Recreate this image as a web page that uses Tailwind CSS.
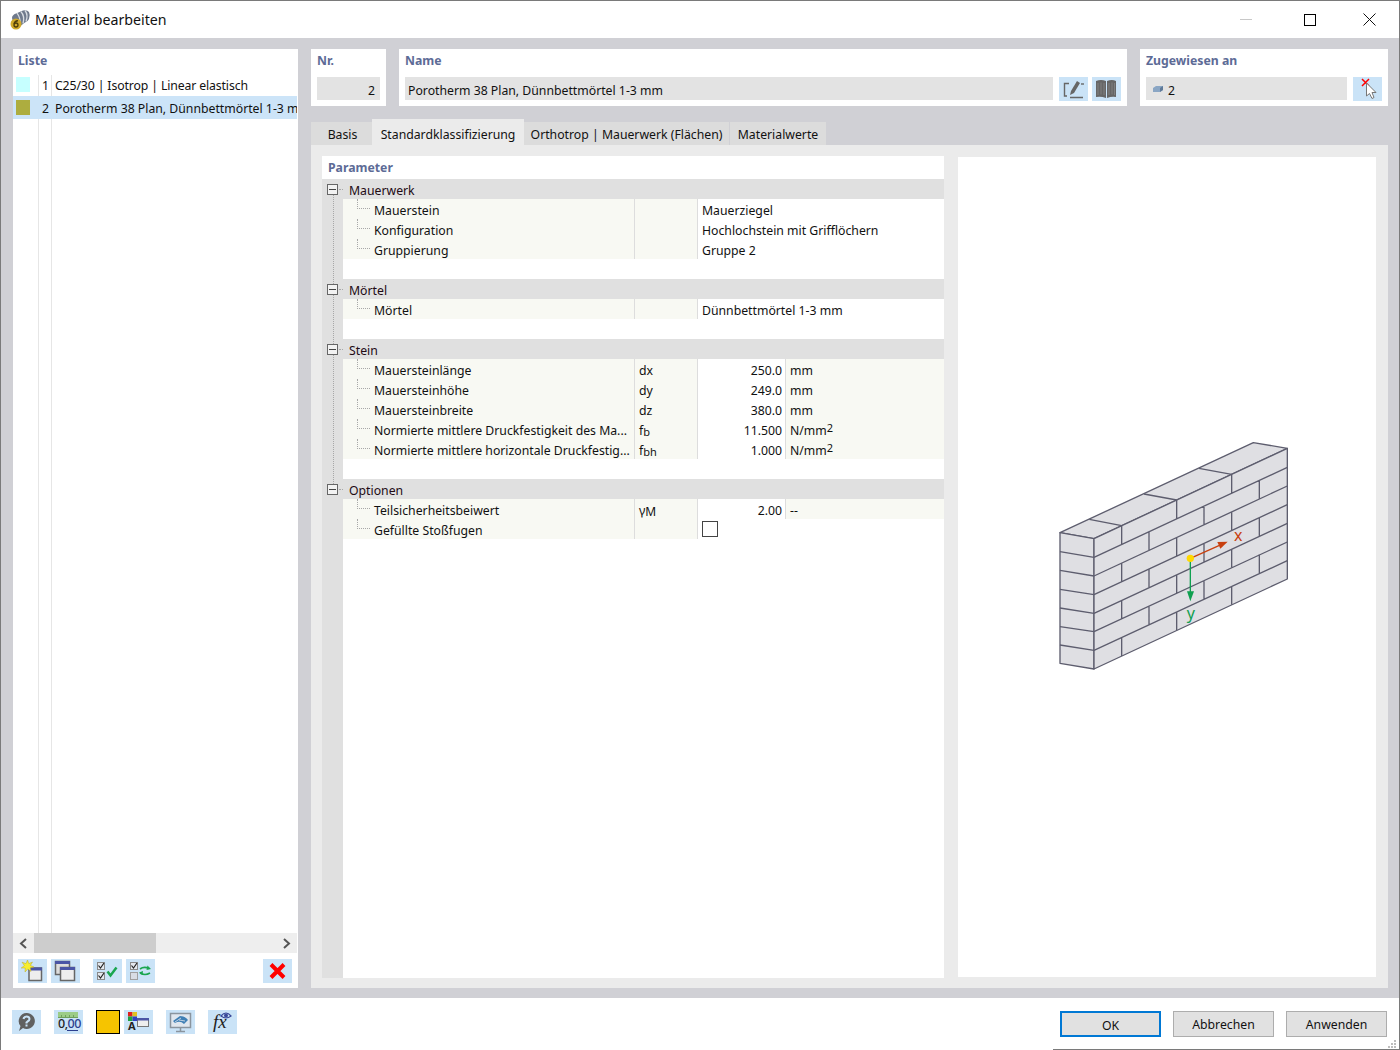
<!DOCTYPE html>
<html lang="de">
  <head>
    <meta charset="UTF-8" />
    <title>Material bearbeiten</title>
    <script src="https://cdn.jsdelivr.net/npm/@tailwindcss/browser@4"></script>
  </head>
  <body class="h-[1050px] w-[1400px] overflow-hidden bg-white font-['Noto_Sans',sans-serif] text-[12.25px] leading-[22px] text-[#111]">
    <div class="flex h-full flex-col border-x border-t border-[#7a7a7a]">
      <!-- Titelleiste -->
      <div class="flex h-[37px] items-center pl-[9px]">
        <svg width="21" height="21" viewBox="0 0 21 21">
          <path d="M2 9 Q2 6 6 4.5 L13 1.5 Q17 0.5 19 3 Q20.5 6 19 10 Q18 12 15 13.5 L9 18 L4 17 Z" fill="#6f7a8c" />
          <path d="M15 1.5 Q18.5 6 16 12.5 M11 2.8 Q15 7 13 14.5 M7 4.2 Q11 9 10 16.5" stroke="#d9dde3" stroke-width="1.3" fill="none" />
          <circle cx="6" cy="15" r="5.5" fill="#d0a92a" />
          <circle cx="6" cy="16" r="2" fill="none" stroke="#4d3d0a" stroke-width="1.3" />
          <path d="M8 11.8 Q5 11.5 4 15" fill="none" stroke="#4d3d0a" stroke-width="1.3" />
        </svg>
        <span class="ml-[4px] text-[14.2px]">Material bearbeiten</span>
        <div class="ml-auto flex items-center">
          <span class="mr-[52px] h-px w-[12px] bg-[#c8c8c8]"></span>
          <span class="mr-[47px] h-[12px] w-[12px] border border-black"></span>
          <svg class="mr-[23px]" width="13" height="13" viewBox="0 0 13 13">
            <path d="M0.5 0.5 L12.5 12.5 M12.5 0.5 L0.5 12.5" stroke="#111" stroke-width="1" />
          </svg>
        </div>
      </div>

      <!-- Hauptbereich -->
      <div class="flex h-[960px] gap-[13px] bg-[#d0d0d5] pt-[11px] pr-[11px] pb-[10px] pl-[12px]">
        <!-- Liste -->
        <div class="flex w-[285px] flex-col bg-white">
          <div class="h-[26px] pl-[5px] pt-[1px] font-bold text-[#5d6b96]">Liste</div>
          <div class="relative flex-1">
            <span class="absolute top-0 left-[25px] h-full w-px bg-[#e6e6e6]"></span>
            <span class="absolute top-0 left-[38px] h-full w-px bg-[#e6e6e6]"></span>
            <div class="relative flex h-[21px] items-center pb-[2px]">
              <span class="ml-[3px] h-[15px] w-[14px] bg-[#c6ffff]"></span>
              <span class="ml-[12px] mt-[2px] w-[7px] text-right">1</span>
              <span class="ml-[6px] mt-[2px] tracking-[-0.12px] whitespace-nowrap">C25/30 | Isotrop | Linear elastisch</span>
            </div>
            <div class="relative flex h-[23px] w-[284px] items-center overflow-hidden bg-[#cce4f8]">
              <span class="ml-[3px] h-[15px] w-[14px] shrink-0 bg-[#adad3f]"></span>
              <span class="ml-[12px] mt-[2px] w-[7px] shrink-0 text-right">2</span>
              <span class="ml-[6px] mt-[2px] whitespace-nowrap">Porotherm 38 Plan, Dünnbettmörtel 1-3 mm</span>
            </div>
          </div>
          <!-- Scrollleiste -->
          <div class="flex h-[20px] w-[284px] items-center bg-[#eeeeee]">
            <svg class="mx-[6px]" width="9" height="11" viewBox="0 0 9 11"><path d="M7 1 L2 5.5 L7 10" fill="none" stroke="#555" stroke-width="2" /></svg>
            <span class="h-full w-[122px] bg-[#cdcdcd]"></span>
            <svg class="ml-auto mr-[6px]" width="9" height="11" viewBox="0 0 9 11"><path d="M2 1 L7 5.5 L2 10" fill="none" stroke="#555" stroke-width="2" /></svg>
          </div>
          <!-- Werkzeuge Liste -->
          <div class="flex h-[35px] items-start pt-[6px] pl-[5px]">
            <button class="h-[24px] w-[29px] bg-[#cae3f7]">
              <svg width="29" height="24" viewBox="0 0 29 24">
                <rect x="11" y="9" width="12.5" height="12.5" fill="#eee" stroke="#666" stroke-width="1.5" />
                <rect x="10.5" y="8.5" width="13.5" height="3" fill="#4a55a5" />
                <path d="M9.5 1 L10.8 4.6 L14.5 3 L12.4 6.4 L16 8 L12.2 8.8 L13 12.5 L9.8 10 L7 13 L7.2 9 L3.2 9 L6.4 6.6 L4 3.2 L8 4.6 Z" fill="#f7ee2e" stroke="#b8ab2c" stroke-width=".5" />
              </svg>
            </button>
            <button class="ml-[4px] h-[24px] w-[29px] bg-[#cae3f7]">
              <svg width="29" height="24" viewBox="0 0 29 24">
                <rect x="4.5" y="2.5" width="14" height="13" fill="#ddd" stroke="#666" stroke-width="1.5" />
                <rect x="4" y="2" width="15" height="3" fill="#4a55a5" />
                <rect x="9.5" y="8.5" width="14" height="13" fill="#eee" stroke="#666" stroke-width="1.5" />
                <rect x="9" y="8" width="15" height="3" fill="#4a55a5" />
              </svg>
            </button>
            <button class="ml-[13px] h-[24px] w-[29px] bg-[#cae3f7]">
              <svg width="29" height="24" viewBox="0 0 29 24">
                <rect x="4.5" y="3.5" width="7" height="7" fill="#e4e8ee" stroke="#8a8a8a" />
                <rect x="4.5" y="13.5" width="7" height="7" fill="#e4e8ee" stroke="#8a8a8a" />
                <path d="M5.5 6.5 L7.5 9 L11 4 M5.5 16.5 L7.5 19 L11 14" fill="none" stroke="#222" stroke-width="1.2" />
                <path d="M14.5 12.5 L17.5 16.5 L23.5 8.5" fill="none" stroke="#1aa64f" stroke-width="2.5" />
              </svg>
            </button>
            <button class="ml-[4px] h-[24px] w-[29px] bg-[#cae3f7]">
              <svg width="29" height="24" viewBox="0 0 29 24">
                <rect x="4.5" y="3.5" width="7" height="7" fill="#e4e8ee" stroke="#8a8a8a" />
                <rect x="4.5" y="13.5" width="7" height="7" fill="#d8dde4" stroke="#a0a0a0" />
                <path d="M5.5 6.5 L7.5 9 L11 4" fill="none" stroke="#222" stroke-width="1.2" />
                <path d="M14 10 Q18 7 23 9.5 M14 14 Q19 17 24 14" fill="none" stroke="#1aa64f" stroke-width="1.6" />
                <path d="M21.5 6.5 L25 10 L20.5 11 Z M17 12 L13 13.5 L16.5 16 Z" fill="#1aa64f" />
              </svg>
            </button>
            <button class="ml-[108px] h-[24px] w-[29px] bg-[#cae3f7]">
              <svg width="29" height="24" viewBox="0 0 29 24">
                <path d="M8 5.5 L21 18.5 M21 5.5 L8 18.5" stroke="#f00" stroke-width="4" />
              </svg>
            </button>
          </div>
        </div>

        <!-- Rechte Seite -->
        <div class="flex w-[1077px] flex-col">
          <div class="flex h-[57px] gap-[13px]">
            <div class="w-[75px] bg-white px-[6px]">
              <div class="h-[28px] pt-[1px] font-bold text-[#5d6b96]">Nr.</div>
              <div class="h-[23px] w-[63px] bg-[#e3e3e3] pr-[5px] pt-[3px] text-right">2</div>
            </div>
            <div class="w-[728px] bg-white px-[6px]">
              <div class="h-[28px] pt-[1px] font-bold text-[#5d6b96]">Name</div>
              <div class="flex items-start">
                <div class="h-[23px] w-[648px] bg-[#e3e3e3] pl-[3px] pt-[3px]">Porotherm 38 Plan, Dünnbettmörtel 1-3 mm</div>
                <button class="ml-[6px] h-[24px] w-[29px] bg-[#cae3f7]">
                  <svg width="29" height="24" viewBox="0 0 29 24">
                    <path d="M10 6.5 H5.5 V19 H8 M11 20.5 H24" fill="none" stroke="#666" stroke-width="1.4" />
                    <path d="M11 18 L12 14 L18 4 L21 6 L15 16 Z" fill="#666" />
                    <path d="M22 7 H25" stroke="#666" stroke-width="1.4" />
                  </svg>
                </button>
                <button class="ml-[4px] h-[24px] w-[29px] bg-[#cae3f7]">
                  <svg width="29" height="24" viewBox="0 0 29 24">
                    <path d="M4 4 Q9 2 14 4 V21 Q9 19 4 20 Z M15 4 Q20 2 24 4 V20 Q20 19 15 21 Z" fill="#666" />
                    <path d="M6 6 V18 M9 5.5 V17.5 M12 6 V18 M17 6 V18 M20 5.5 V17.5 M22.5 6 V18" stroke="#808080" stroke-width="1" />
                  </svg>
                </button>
              </div>
            </div>
            <div class="w-[248px] bg-white px-[6px]">
              <div class="h-[28px] pt-[1px] font-bold text-[#5d6b96]">Zugewiesen an</div>
              <div class="flex items-start">
                <div class="flex h-[23px] w-[201px] items-center bg-[#e3e3e3] pl-[7px] pt-[4px]">
                  <svg class="mb-[3px]" width="10" height="8" viewBox="0 0 10 8">
                    <path d="M0 3 L3 1 H10 V5 L7 7 H0 Z" fill="#8aa6c4" />
                    <path d="M7 3 L10 1 V5 L7 7 Z" fill="#5f7a99" />
                  </svg>
                  <span class="ml-[5px]">2</span>
                </div>
                <button class="ml-[6px] h-[24px] w-[29px] bg-[#cae3f7]">
                  <svg width="29" height="24" viewBox="0 0 29 24">
                    <path d="M9 2 L16 9 M16 2 L9 9" stroke="#f00" stroke-width="1.5" />
                    <path d="M13.5 6 V19 L16.5 16.5 L19 21.5 L21 20.5 L19 15.5 L23 15.5 Z" fill="#fff" stroke="#777" />
                  </svg>
                </button>
              </div>
            </div>
          </div>

          <!-- Tabs -->
          <div class="mt-[13px] flex h-[26px] items-end">
            <div class="flex h-[23px] w-[61px] items-center justify-center bg-[#dcdcdc] pt-[2px] pl-[2px]">Basis</div>
            <div class="flex h-[26px] w-[152px] items-center justify-center bg-[#ebebeb] pt-[6px]">Standardklassifizierung</div>
            <div class="flex h-[23px] w-[205px] items-center justify-center bg-[#dcdcdc] pt-[2px]">Orthotrop | Mauerwerk (Flächen)</div>
            <div class="flex h-[23px] w-[97px] items-center justify-center border-l border-[#d0d0d5] bg-[#dcdcdc] pt-[2px]">Materialwerte</div>
          </div>

          <div class="flex flex-1 gap-[14px] bg-[#ebebeb] pt-[11px] pr-[12px] pb-[10px] pl-[11px]">
            <!-- Parameter -->
            <div class="flex w-[622px] flex-col">
              <div class="h-[23px] bg-white pl-[6px] pt-[1px] font-bold text-[#5d6b96]">Parameter</div>
              <div class="relative flex flex-1 flex-col bg-[#e0e0e0] leading-[24px]">
                <span class="absolute top-[16px] left-[11px] h-[295px] border-l border-dotted border-[#a8a8a8]"></span>

                <!-- Mauerwerk -->
                <div class="relative flex h-[20px] items-center pl-[5px]">
                  <span class="z-10 flex h-[11px] w-[11px] items-center justify-center border border-[#666] bg-[#f2f2f2]"><span class="h-px w-[7px] bg-[#444]"></span></span>
                  <span class="ml-px mr-[6px] w-[4px] border-t border-dotted border-[#a8a8a8]"></span>
                  <span class="mt-[4px] text-[#220a14]">Mauerwerk</span>
                </div>
                <div class="ml-[21px] bg-white">
                  <div class="relative grid h-[20px] grid-cols-[292px_63px_246px] grid-rows-[20px]">
                    <span class="absolute top-0 left-[14px] h-[10px] w-[13px] border-b border-l border-dotted border-[#a8a8a8]"></span>
                    <span class="border-r border-[#dddddd] bg-[#f8f9f3] pl-[31px]">Mauerstein</span>
                    <span class="border-r border-[#dddddd] bg-[#f8f9f3]"></span>
                    <span class="pl-[4px]">Mauerziegel</span>
                  </div>
                  <div class="relative grid h-[20px] grid-cols-[292px_63px_246px] grid-rows-[20px]">
                    <span class="absolute top-0 left-[14px] h-[10px] w-[13px] border-b border-l border-dotted border-[#a8a8a8]"></span>
                    <span class="border-r border-[#dddddd] bg-[#f8f9f3] pl-[31px]">Konfiguration</span>
                    <span class="border-r border-[#dddddd] bg-[#f8f9f3]"></span>
                    <span class="pl-[4px]">Hochlochstein mit Grifflöchern</span>
                  </div>
                  <div class="relative grid h-[20px] grid-cols-[292px_63px_246px] grid-rows-[20px]">
                    <span class="absolute top-0 left-[14px] h-[10px] w-[13px] border-b border-l border-dotted border-[#a8a8a8]"></span>
                    <span class="border-r border-[#dddddd] bg-[#f8f9f3] pl-[31px]">Gruppierung</span>
                    <span class="border-r border-[#dddddd] bg-[#f8f9f3]"></span>
                    <span class="pl-[4px]">Gruppe 2</span>
                  </div>
                  <div class="h-[20px]"></div>
                </div>

                <!-- Mörtel -->
                <div class="relative flex h-[20px] items-center pl-[5px]">
                  <span class="z-10 flex h-[11px] w-[11px] items-center justify-center border border-[#666] bg-[#f2f2f2]"><span class="h-px w-[7px] bg-[#444]"></span></span>
                  <span class="ml-px mr-[6px] w-[4px] border-t border-dotted border-[#a8a8a8]"></span>
                  <span class="mt-[4px] text-[#220a14]">Mörtel</span>
                </div>
                <div class="ml-[21px] bg-white">
                  <div class="relative grid h-[20px] grid-cols-[292px_63px_246px] grid-rows-[20px]">
                    <span class="absolute top-0 left-[14px] h-[10px] w-[13px] border-b border-l border-dotted border-[#a8a8a8]"></span>
                    <span class="border-r border-[#dddddd] bg-[#f8f9f3] pl-[31px]">Mörtel</span>
                    <span class="border-r border-[#dddddd] bg-[#f8f9f3]"></span>
                    <span class="pl-[4px]">Dünnbettmörtel 1-3 mm</span>
                  </div>
                  <div class="h-[20px]"></div>
                </div>

                <!-- Stein -->
                <div class="relative flex h-[20px] items-center pl-[5px]">
                  <span class="z-10 flex h-[11px] w-[11px] items-center justify-center border border-[#666] bg-[#f2f2f2]"><span class="h-px w-[7px] bg-[#444]"></span></span>
                  <span class="ml-px mr-[6px] w-[4px] border-t border-dotted border-[#a8a8a8]"></span>
                  <span class="mt-[4px] text-[#220a14]">Stein</span>
                </div>
                <div class="ml-[21px] bg-white">
                  <div class="relative grid h-[20px] grid-cols-[292px_63px_88px_158px] grid-rows-[20px]">
                    <span class="absolute top-0 left-[14px] h-[10px] w-[13px] border-b border-l border-dotted border-[#a8a8a8]"></span>
                    <span class="border-r border-[#dddddd] bg-[#f8f9f3] pl-[31px]">Mauersteinlänge</span>
                    <span class="border-r border-[#dddddd] bg-[#f8f9f3] pl-[4px]">dx</span>
                    <span class="border-r border-[#dddddd] pr-[3px] text-right">250.0</span>
                    <span class="bg-[#f8f9f3] pl-[4px]">mm</span>
                  </div>
                  <div class="relative grid h-[20px] grid-cols-[292px_63px_88px_158px] grid-rows-[20px]">
                    <span class="absolute top-0 left-[14px] h-[10px] w-[13px] border-b border-l border-dotted border-[#a8a8a8]"></span>
                    <span class="border-r border-[#dddddd] bg-[#f8f9f3] pl-[31px]">Mauersteinhöhe</span>
                    <span class="border-r border-[#dddddd] bg-[#f8f9f3] pl-[4px]">dy</span>
                    <span class="border-r border-[#dddddd] pr-[3px] text-right">249.0</span>
                    <span class="bg-[#f8f9f3] pl-[4px]">mm</span>
                  </div>
                  <div class="relative grid h-[20px] grid-cols-[292px_63px_88px_158px] grid-rows-[20px]">
                    <span class="absolute top-0 left-[14px] h-[10px] w-[13px] border-b border-l border-dotted border-[#a8a8a8]"></span>
                    <span class="border-r border-[#dddddd] bg-[#f8f9f3] pl-[31px]">Mauersteinbreite</span>
                    <span class="border-r border-[#dddddd] bg-[#f8f9f3] pl-[4px]">dz</span>
                    <span class="border-r border-[#dddddd] pr-[3px] text-right">380.0</span>
                    <span class="bg-[#f8f9f3] pl-[4px]">mm</span>
                  </div>
                  <div class="relative grid h-[20px] grid-cols-[292px_63px_88px_158px] grid-rows-[20px]">
                    <span class="absolute top-0 left-[14px] h-[10px] w-[13px] border-b border-l border-dotted border-[#a8a8a8]"></span>
                    <span class="overflow-hidden border-r border-[#dddddd] bg-[#f8f9f3] pl-[31px] whitespace-nowrap">Normierte mittlere Druckfestigkeit des Ma...</span>
                    <span class="border-r border-[#dddddd] bg-[#f8f9f3] pl-[4px]">f<span class="relative top-[1px] text-[11px]">b</span></span>
                    <span class="border-r border-[#dddddd] pr-[3px] text-right">11.500</span>
                    <span class="bg-[#f8f9f3] pl-[4px]">N/mm<span class="relative top-[-3px] text-[11px] leading-[10px]">2</span></span>
                  </div>
                  <div class="relative grid h-[20px] grid-cols-[292px_63px_88px_158px] grid-rows-[20px]">
                    <span class="absolute top-0 left-[14px] h-[10px] w-[13px] border-b border-l border-dotted border-[#a8a8a8]"></span>
                    <span class="overflow-hidden border-r border-[#dddddd] bg-[#f8f9f3] pl-[31px] whitespace-nowrap">Normierte mittlere horizontale Druckfestig...</span>
                    <span class="border-r border-[#dddddd] bg-[#f8f9f3] pl-[4px]">f<span class="relative top-[1px] text-[11px]">bh</span></span>
                    <span class="border-r border-[#dddddd] pr-[3px] text-right">1.000</span>
                    <span class="bg-[#f8f9f3] pl-[4px]">N/mm<span class="relative top-[-3px] text-[11px] leading-[10px]">2</span></span>
                  </div>
                  <div class="h-[20px]"></div>
                </div>

                <!-- Optionen -->
                <div class="relative flex h-[20px] items-center pl-[5px]">
                  <span class="z-10 flex h-[11px] w-[11px] items-center justify-center border border-[#666] bg-[#f2f2f2]"><span class="h-px w-[7px] bg-[#444]"></span></span>
                  <span class="ml-px mr-[6px] w-[4px] border-t border-dotted border-[#a8a8a8]"></span>
                  <span class="mt-[4px] text-[#220a14]">Optionen</span>
                </div>
                <div class="ml-[21px] flex flex-1 flex-col bg-white">
                  <div class="relative grid h-[20px] grid-cols-[292px_63px_88px_158px] grid-rows-[20px]">
                    <span class="absolute top-0 left-[14px] h-[10px] w-[13px] border-b border-l border-dotted border-[#a8a8a8]"></span>
                    <span class="border-r border-[#dddddd] bg-[#f8f9f3] pl-[31px]">Teilsicherheitsbeiwert</span>
                    <span class="border-r border-[#dddddd] bg-[#f8f9f3] pl-[4px]">γ<span class="relative top-[1px] text-[12px]">M</span></span>
                    <span class="border-r border-[#dddddd] pr-[3px] text-right">2.00</span>
                    <span class="bg-[#f8f9f3] pl-[4px]">--</span>
                  </div>
                  <div class="relative grid h-[20px] grid-cols-[292px_63px_246px] grid-rows-[20px]">
                    <span class="absolute top-0 left-[14px] h-[10px] w-[13px] border-b border-l border-dotted border-[#a8a8a8]"></span>
                    <span class="border-r border-[#dddddd] bg-[#f8f9f3] pl-[31px]">Gefüllte Stoßfugen</span>
                    <span class="border-r border-[#dddddd] bg-[#f8f9f3]"></span>
                    <span class="pl-[4px] pt-[2px]"><span class="block h-[16px] w-[16px] border border-[#444] bg-white"></span></span>
                  </div>
                </div>
              </div>
            </div>

            <!-- Vorschau -->
            <div class="mt-px mb-px w-[418px] bg-white pt-[273px] pl-[82px]">
              <svg width="260" height="250" viewBox="0 0 780 750">
                <g fill="#dfdfe3" stroke="#5d5d6e" stroke-width="4" stroke-linejoin="round">
                  <path d="M60 308 L640 38 L742 55 L162 326 Z" />
                  <path d="M60 308 L162 326 L162 717 L60 700 Z" />
                  <path d="M162 326 L742 55 L742 447 L162 717 Z" />
                </g>
                <path
                  d="M60 365 L162 382 M60 421 L162 438 M60 478 L162 494 M60 534 L162 550 M60 590 L162 605 M60 645 L162 661
                     M162 382 L742 112 M162 438 L742 168 M162 494 L742 224 M162 550 L742 280 M162 605 L742 336 M162 661 L742 392
                     M245 287 L148 268 M410 210 L312 192 M575 133 L477 115
                     M245 287 V343 M410 210 V266 M575 133 V189
                     M327 305 V361 M492 228 V284 M658 150 V206
                     M245 399 V455 M410 322 V378 M575 245 V301
                     M327 417 V473 M492 340 V396 M658 262 V318
                     M245 511 V566 M410 434 V489 M575 357 V412
                     M327 528 V584 M492 451 V507 M658 373 V429
                     M245 622 V678 M410 545 V601 M575 468 V524"
                  fill="none"
                  stroke="#5d5d6e"
                  stroke-width="4"
                />
                <path d="M451 385 L545 343" stroke="#c8400f" stroke-width="4" />
                <path d="M563 335 L532 336 L541 356 Z" fill="#c8400f" />
                <path d="M451 385 V490" stroke="#10a050" stroke-width="4" />
                <path d="M451 514 L441 484 H462 Z" fill="#10a050" />
                <circle cx="451" cy="385" r="11" fill="#ffd800" />
                <text x="582" y="334" font-size="48" fill="#c8400f" font-family="Noto Sans, sans-serif">x</text>
                <text x="440" y="568" font-size="48" fill="#10a050" font-family="Noto Sans, sans-serif">y</text>
              </svg>
            </div>
          </div>
        </div>
      </div>

      <!-- Fussleiste -->
      <div class="relative flex flex-1 items-start pl-[11px] pt-[12px]">
        <button class="h-[24px] w-[29px] bg-[#cae3f7]">
          <svg width="29" height="24" viewBox="0 0 29 24">
            <path d="M14.5 3 A8 8 0 1 1 11 18 L7 21 L8.5 16 A8 8 0 0 1 14.5 3 Z" fill="#606060" />
            <path d="M11.5 9 Q12 6.5 14.5 6.5 Q17.5 6.5 17.5 9 Q17.5 10.5 15.5 11.5 L14.5 12.5 V13.5" fill="none" stroke="#cae3f7" stroke-width="2" />
            <rect x="13.5" y="14.5" width="2" height="2" fill="#cae3f7" />
          </svg>
        </button>
        <button class="relative ml-[13px] h-[24px] w-[29px] bg-[#cae3f7] text-left">
          <svg class="absolute top-[2px] left-[4px]" width="20" height="6" viewBox="0 0 20 6">
            <rect width="20" height="6" fill="#9ccc88" />
            <path d="M3.5 3 V6 M7.5 3 V6 M11.5 3 V6 M15.5 3 V6" stroke="#6f9f5c" />
            <path d="M0 5.5 H20" stroke="#6f9f5c" />
          </svg>
          <span class="absolute top-[7px] left-[4px] text-[12.5px] font-medium leading-[14px] tracking-[-0.5px] text-[#222]">0,<span class="text-[#2b3f8f]">00</span></span>
          <span class="absolute top-[20px] left-[13px] h-px w-[11px] bg-[#2b3f8f]"></span>
        </button>
        <span class="ml-[13px] h-[24px] w-[24px] border border-black bg-[#f6c400]"></span>
        <button class="ml-[4px] h-[24px] w-[29px] bg-[#cae3f7]">
          <svg width="29" height="24" viewBox="0 0 29 24">
            <rect x="4" y="2" width="4.5" height="4.5" fill="#e02020" /><rect x="8.5" y="2" width="4.5" height="4.5" fill="#e0c020" />
            <rect x="4" y="6.5" width="4.5" height="4.5" fill="#20a040" /><rect x="8.5" y="6.5" width="4.5" height="4.5" fill="#3040c0" />
            <text x="4" y="20" font-size="11" font-weight="700" fill="#222" font-family="Noto Sans, sans-serif">A</text>
            <rect x="13.5" y="8.5" width="11" height="8" fill="#eee" stroke="#777" />
            <rect x="13" y="8" width="12" height="2.5" fill="#4a55a5" />
          </svg>
        </button>
        <button class="ml-[13px] h-[24px] w-[29px] bg-[#cae3f7]">
          <svg width="29" height="24" viewBox="0 0 29 24">
            <rect x="4.5" y="3.5" width="20" height="14" fill="#dfe6ee" stroke="#8a949e" stroke-width="1.5" />
            <path d="M7 11 L14 6 Q19 6 22 10 L18 14 Q14 10 9 13 Z" fill="#3f7fb5" />
            <path d="M9 12 L15 8 M13 10 L19 11" stroke="#dfe6ee" stroke-width=".8" />
            <path d="M14.5 18 V21 M10 21.5 H19" stroke="#8a949e" stroke-width="1.5" />
          </svg>
        </button>
        <button class="relative ml-[13px] h-[24px] w-[29px] bg-[#cae3f7]">
          <span class="absolute top-[2px] left-[5px] font-['Liberation_Serif',serif] text-[19px] leading-[20px] italic text-[#222]">fx</span>
          <svg class="absolute top-0 left-0" width="29" height="24" viewBox="0 0 29 24">
            <path d="M13 6 Q18 0 23 6 Q18 10 13 6 Z" fill="#cae3f7" stroke="#3b4a9a" stroke-width="1.2" />
            <circle cx="18" cy="5.5" r="2" fill="#3b4a9a" />
          </svg>
        </button>
        <div class="ml-auto mr-[12px] flex gap-[12px]">
          <button class="mt-px h-[26px] w-[101px] border-2 border-[#0078d4] bg-[#e1e1e1] pt-[2px]">OK</button>
          <button class="mt-px h-[26px] w-[101px] border border-[#adadad] bg-[#e1e1e1] pt-[2px]">Abbrechen</button>
          <button class="mt-px h-[26px] w-[101px] border border-[#adadad] bg-[#e1e1e1] pt-[2px]">Anwenden</button>
        </div>
        <!-- Groessen-Griff -->
        <svg class="absolute right-[2px] bottom-[1px]" width="10" height="10" viewBox="0 0 10 10">
          <path d="M7 1h2v2h-2z M4 4h2v2h-2z M7 4h2v2h-2z M1 7h2v2h-2z M4 7h2v2h-2z M7 7h2v2h-2z" fill="#bdbdbd" />
        </svg>
        <span class="absolute right-0 bottom-0 h-px w-[346px] bg-[#7a7a7a]"></span>
      </div>
    </div>
  </body>
</html>
